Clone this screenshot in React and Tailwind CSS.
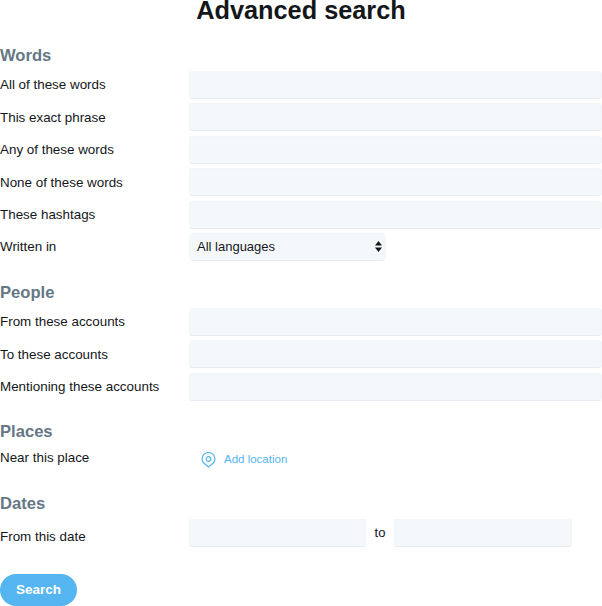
import React from 'react';

const labelCls = 'w-[189px] shrink-0 text-[13.4px] text-[#14171a]';
const inputCls = 'h-[28px] bg-[#f5f8fa] border border-[#f3f6f8] border-b-[#e6ecf0]';

const Field = ({ label }) => (
  <div className="flex items-center h-[28px] mb-[4.4px]">
    <label className={`${labelCls} pt-[1px]`}>{label}</label>
    <input className={`${inputCls} flex-1 min-w-0 rounded-[3px]`} />
  </div>
);

const Heading = ({ children, className }) => (
  <h2 className={`text-[16.6px] leading-[20px] font-bold text-[#657786] ${className}`}>{children}</h2>
);

const App = () => {
  return (
    <div className="w-[602px] h-[606px] overflow-hidden bg-white font-['Liberation_Sans',sans-serif]">
      <h1 className="text-[25.3px] leading-[20px] font-bold text-[#14171a] text-center">Advanced search</h1>

      <Heading className="mt-[26px] mb-[5px]">Words</Heading>
      <Field label="All of these words" />
      <Field label="This exact phrase" />
      <Field label="Any of these words" />
      <Field label="None of these words" />
      <Field label="These hashtags" />
      <div className="flex items-center h-[28px]">
        <label className={`${labelCls} pt-[1px]`}>Written in</label>
        <div className={`${inputCls} w-[197px] flex items-center justify-between pl-[7px] pr-[3px] rounded-[5px] text-[13px] text-[#14171a]`}>
          <span>All languages</span>
          <svg width="7" height="11" viewBox="0 0 7 11" className="fill-[#14171a]">
            <path d="M3.5 0 7 4.5H0z" />
            <path d="M3.5 11 0 6.5h7z" />
          </svg>
        </div>
      </div>

      <Heading className="mt-[22px] mb-[5px]">People</Heading>
      <Field label="From these accounts" />
      <Field label="To these accounts" />
      <Field label="Mentioning these accounts" />

      <Heading className="mt-[21px] mb-[8px]">Places</Heading>
      <div className="flex h-[22px]">
        <label className={`${labelCls} leading-[16px]`}>Near this place</label>
        <a className="flex items-center ml-[12px] h-[22px] -mt-[1px] text-[11.5px] text-[#55b5f0]">
          <svg width="15" height="16" viewBox="0 0 15 16" fill="none" className="stroke-[#55b5f0] mr-[8px]" strokeWidth="1.2">
            <path d="M7.5 15 3 11.2C1.6 10 1 8.6 1 7a6.5 6.5 0 0 1 13 0c0 1.6-.6 3-2 4.2z" />
            <circle cx="7.5" cy="7" r="2.3" />
          </svg>
          Add location
        </a>
      </div>

      <Heading className="mt-[22px] mb-[5px]">Dates</Heading>
      <div className="flex items-center h-[28px]">
        <label className={`${labelCls} pt-[9px]`}>From this date</label>
        <input className={`${inputCls} w-[177px] rounded-l-[3px]`} />
        <span className="w-[28px] pt-[1px] text-center text-[13px] text-[#14171a]">to</span>
        <input className={`${inputCls} w-[178px] rounded-r-[3px]`} />
      </div>

      <button className="block mt-[27px] w-[77px] h-[32px] rounded-full bg-[#55b5f0] text-white text-[13.5px] font-bold">Search</button>
    </div>
  );
};

export default App;
